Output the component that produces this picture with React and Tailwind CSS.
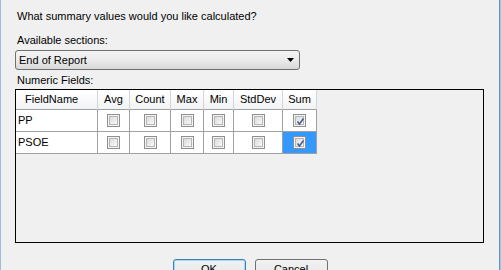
import React from 'react';

const columns = [
  { name: 'FieldName', width: 'w-[82px]' },
  { name: 'Avg', width: 'w-[32px]' },
  { name: 'Count', width: 'w-[41px]' },
  { name: 'Max', width: 'w-[33px]' },
  { name: 'Min', width: 'w-[30px]' },
  { name: 'StdDev', width: 'w-[49px]' },
  { name: 'Sum', width: 'w-[34px]' },
];

const rows = [
  { field: 'PP', checks: [false, false, false, false, false, true] },
  { field: 'PSOE', checks: [false, false, false, false, false, true], selected: 5 },
];

const CheckBox = ({ checked }) => (
  <div className="w-[13px] h-[13px] border border-[#8e8f8f] bg-[#f4f4f4] p-[1px]">
    <div className="w-full h-full border border-[#b6b6b6] bg-linear-to-br from-[#dcdcdc] to-[#f8f8f8] relative">
      {checked && (
        <svg width="11" height="11" viewBox="0 0 11 11" className="absolute -left-[1px] -top-[1px]">
          <path d="M2.5 5.5 L4.5 8 L8.5 2.5" stroke="#4a5d8f" strokeWidth="1.6" fill="none" />
        </svg>
      )}
    </div>
  </div>
);

const App = () => {
  return (
    <div
      className="w-[501px] h-[270px] overflow-hidden flex bg-[#f0f0f0] text-black text-[11px] leading-[13px]"
      style={{ fontFamily: '"Liberation Sans", Arial, sans-serif' }}
    >
      <div className="w-[1px] shrink-0 bg-[#9dbbd8]" />
      <div className="flex-1 flex flex-col pl-[14px] pt-[10px]">
        <div className="shrink-0 ml-[2px] h-[13px]">What summary values would you like calculated?</div>
        <div className="shrink-0 ml-[2px] mt-[11px] h-[13px]">Available sections:</div>

        {/* Dropdown */}
        <div className="shrink-0 mt-[3px] w-[285px] h-[20px] rounded-[3px] border border-[#707070] bg-linear-to-b from-[#f3f3f3] via-[#ebebeb] to-[#d8d8d8] flex items-center justify-between pl-[3px] pr-[5px]">
          <span>End of Report</span>
          <svg width="7" height="4" viewBox="0 0 7 4">
            <path d="M0 0 H7 L3.5 4 Z" fill="#000" />
          </svg>
        </div>

        <div className="shrink-0 ml-[2px] mt-[4px] h-[13px]">Numeric Fields:</div>

        {/* Grid */}
        <div className="shrink-0 mt-[2px] w-[469px] h-[154px] border border-black bg-[#f0f0f0]">
          <div className="flex h-[20px]">
            {columns.map((col, i) => (
              <div
                key={col.name}
                className={`${col.width} h-full border-b border-r border-b-[#a0a0a0] border-r-[#d5d5d5] bg-linear-to-b from-white to-[#f2f3f5] flex items-center ${
                  i === 0 ? 'pl-[9px]' : 'justify-center'
                }`}
              >
                {col.name}
              </div>
            ))}
          </div>
          {rows.map((row) => (
            <div key={row.field} className="flex h-[22px]">
              <div className="w-[82px] h-full border-b border-r border-[#a0a0a0] bg-white flex items-center pl-[2px]">
                {row.field}
              </div>
              {row.checks.map((c, i) => (
                <div
                  key={i}
                  className={`${columns[i + 1].width} h-full border-b border-r border-[#a0a0a0] flex items-center justify-center ${
                    row.selected === i ? 'bg-[#3399ff]' : 'bg-white'
                  }`}
                >
                  <CheckBox checked={c} />
                </div>
              ))}
            </div>
          ))}
        </div>

        {/* Buttons */}
        <div className="shrink-0 mt-[16px] flex justify-center gap-[9px] pr-[14px]">
          <button className="w-[73px] h-[23px] rounded-[3px] border border-[#3c7fb1] bg-linear-to-b from-[#f2f2f2] via-[#ebebeb] to-[#dddddd] shadow-[inset_0_0_0_1px_#9fdcf7] flex items-start justify-center pt-[3px]">
            OK
          </button>
          <button className="w-[73px] h-[23px] rounded-[3px] border border-[#707070] bg-linear-to-b from-[#f2f2f2] via-[#ebebeb] to-[#dddddd] flex items-start justify-center pt-[3px]">
            Cancel
          </button>
        </div>
      </div>
      <div className="w-[1px] shrink-0 bg-[#6f8fae]" />
      <div className="w-[1px] shrink-0 bg-[#8ccaf0]" />
    </div>
  );
};

export default App;
